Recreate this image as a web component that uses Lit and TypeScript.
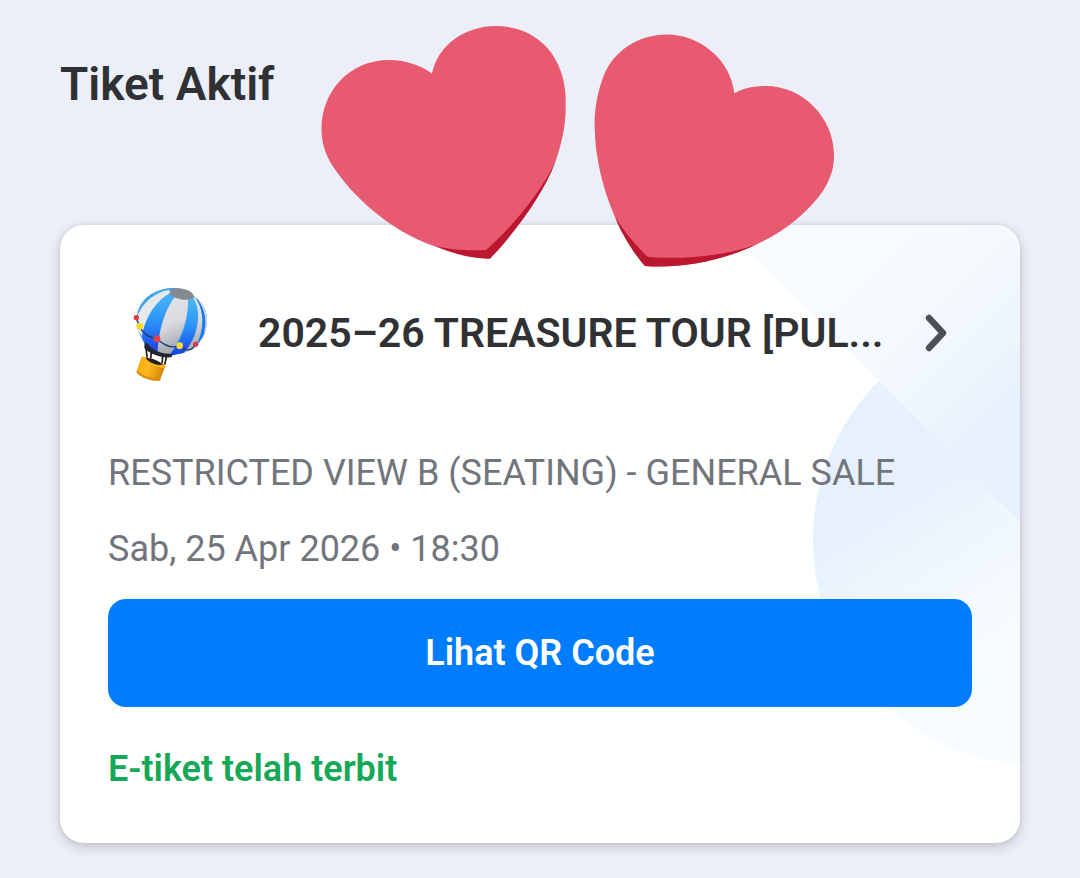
import { LitElement, html, css } from "lit";
import { customElement, property } from "lit/decorators.js";

@customElement("balloon-icon")
class BalloonIcon extends LitElement {
  static styles = css`
    :host { display: block; flex: none; width: 120px; height: 120px; }
    svg { display: block; width: 100%; height: 100%; }
  `;
  render() {
    return html`<svg viewBox="-6 9 360 360" aria-hidden="true">
      <defs>
        <linearGradient id="blue" x1="0" y1="0" x2="0" y2="1">
          <stop offset="0" stop-color="#4cb8f6" /><stop offset=".5" stop-color="#2a90f8" /><stop offset="1" stop-color="#1a3ce0" />
        </linearGradient>
        <linearGradient id="white" x1="0" y1="0" x2=".2" y2="1">
          <stop offset="0" stop-color="#e4e5e8" /><stop offset=".55" stop-color="#d9dade" /><stop offset="1" stop-color="#a2a6ae" />
        </linearGradient>
        <linearGradient id="gold" x1="0" y1="0" x2="1" y2=".3">
          <stop offset="0" stop-color="#f9a50c" /><stop offset=".5" stop-color="#fdbb1f" /><stop offset="1" stop-color="#d88708" />
        </linearGradient>
        <clipPath id="envelope"><path d="M180 54C208 50 236 62 258 84C284 104 294 132 290 164C286 196 268 222 244 238C224 250 202 254 186 256C164 256 134 252 112 236C104 216 82 190 80 158C76 104 116 60 180 54Z" /></clipPath>
      </defs>
      <g clip-path="url(#envelope)">
        <path fill="#3fa4ee" d="M70 45H300V265H70Z" />
        <path fill="#e6e8ec" d="M176 60C140 66 98 92 80 145L82 180C88 186 94 194 98 202C104 150 136 94 186 66Z" />
        <path fill="url(#blue)" d="M186 66C138 90 104 144 96 200L108 238L146 250C144 190 158 122 204 76Z" />
        <path fill="url(#white)" d="M200 74C160 120 146 190 142 250L176 256C206 220 238 150 234 86C224 86 210 82 200 74Z" />
        <path fill="url(#blue)" d="M234 86C240 150 212 220 176 258L222 250C254 226 274 150 250 84Z" />
        <path fill="url(#white)" d="M250 84C278 130 264 204 220 250L252 234C286 190 284 120 256 82Z" />
        <path fill="#1d78ee" d="M256 84C286 124 284 184 254 234L296 210V100Z" />
        <path fill="#dfe4ec" d="M262 88C284 114 292 152 282 188L296 180V110Z" />
      </g>
      <ellipse cx="215" cy="72" rx="37" ry="16" fill="#858a8f" transform="rotate(12 215 72)" />
      <path d="M79 144L89 170C100 192 120 204 141 206C162 226 184 236 209 228C226 244 246 244 257 223" fill="none" stroke="#1c3c80" stroke-width="4" />
      <path d="M108 235L112 268M124 244L122 270M158 258L156 282M170 258L164 284" stroke="#17191d" stroke-width="5" />
      <path d="M105 218C102 226 102 232 105 238C126 254 156 266 182 262C187 260 188 256 186 252C160 252 128 244 114 222Z" fill="#24272d" />
      <path d="M94 262L166 288L150 330C124 332 98 322 80 304Z" fill="url(#gold)" />
      <path d="M96 259C118 262 148 272 167 287C166 292 162 295 158 294C136 290 110 280 94 268Z" fill="#f9b325" />
      <path d="M106 263C126 264 148 272 159 285C138 286 118 278 106 263Z" fill="#22201d" />
      <path d="M80 300C96 318 126 328 152 326L150 332C124 334 94 324 80 308Z" fill="#df8708" />
      <circle cx="79" cy="143" r="8" fill="#e23b46" /><circle cx="89" cy="169" r="10" fill="#ffdc16" />
      <circle cx="141" cy="206" r="10" fill="#e6404b" /><circle cx="209" cy="227" r="10" fill="#ffdc3c" />
      <circle cx="257" cy="223" r="8" fill="#d63a49" />
    </svg>`;
  }
}

@customElement("ticket-card")
class TicketCard extends LitElement {
  @property() event = "";
  @property() category = "";
  @property() date = "";
  @property() status = "";

  static styles = css`
    :host {
      display: block;
      position: relative;
      padding: 48px;
      border-radius: 24px;
      background: #fff;
      box-shadow: 0 4px 12px rgba(40, 30, 50, 0.2), 0 0 4px rgba(40, 30, 50, 0.1);
    }
    .decor {
      position: absolute;
      top: 0;
      right: 0;
      width: 300px;
      height: 542px;
      border-top-right-radius: 24px;
    }
    .content { position: relative; }
    .head {
      display: flex;
      align-items: center;
      gap: 30px;
      color: #303135;
      text-decoration: none;
    }
    .event {
      flex: 1;
      min-width: 0;
      margin: 0;
      font-size: 41px;
      line-height: 60px;
      font-weight: 600;
      white-space: nowrap;
    }
    .chevron { flex: none; width: 60px; height: 60px; }
    .line {
      margin: 24px 0;
      font-size: 36px;
      line-height: 52px;
      color: #73757c;
    }
    .category { margin-top: 54px; }
    .action {
      display: block;
      width: 100%;
      height: 108px;
      padding: 0;
      border: 0;
      border-radius: 18px;
      background: #007dff;
      color: #fff;
      font: inherit;
      font-size: 36px;
      font-weight: 600;
    }
    .status {
      margin: 36px 0 0;
      font-size: 36px;
      line-height: 52px;
      font-weight: 600;
      color: #15a857;
    }
  `;

  render() {
    return html`
      <svg class="decor" viewBox="720 225 300 542" aria-hidden="true">
        <defs>
          <linearGradient id="disc" gradientUnits="userSpaceOnUse" x1="880" y1="500" x2="980" y2="660">
            <stop offset="0" stop-color="#e6f1fd" /><stop offset=".5" stop-color="#f0f7fe" /><stop offset="1" stop-color="#f8fcff" />
          </linearGradient>
          <linearGradient id="wedge" gradientUnits="userSpaceOnUse" x1="840" y1="270" x2="1000" y2="430">
            <stop offset="0" stop-color="#f8fcff" /><stop offset=".5" stop-color="#f3f8fe" /><stop offset="1" stop-color="#e6f1fd" />
          </linearGradient>
        </defs>
        <circle cx="1038" cy="540" r="225" fill="url(#disc)" />
        <path d="M723 225H1020V522Z" fill="url(#wedge)" />
      </svg>
      <div class="content">
        <a class="head" href="#">
          <balloon-icon></balloon-icon>
          <h2 class="event">${this.event}</h2>
          <svg class="chevron" viewBox="0 0 60 60" fill="none" stroke="#4e5059" stroke-width="6.4" stroke-linecap="round" stroke-linejoin="round" aria-hidden="true">
            <path d="M17 15L31 30L17 45" />
          </svg>
        </a>
        <p class="line category">${this.category}</p>
        <p class="line">${this.date}</p>
        <button class="action" type="button">Lihat QR Code</button>
        <p class="status">${this.status}</p>
      </div>
    `;
  }
}

@customElement("app-root")
class AppRoot extends LitElement {
  static styles = css`
    :host {
      display: block;
      position: relative;
      box-sizing: border-box;
      min-height: 100vh;
      padding: 54px 60px 35px;
      background: #eceff7;
      font-family: Roboto, "Noto Sans", sans-serif;
    }
    .title {
      margin: 0 0 111px;
      font-size: 46px;
      line-height: 60px;
      font-weight: 600;
      color: #303135;
    }
    .hearts {
      position: absolute;
      top: 24px;
      left: 320px;
      width: 516px;
      height: 246px;
    }
  `;

  render() {
    return html`
      <h1 class="title">Tiket Aktif</h1>
      <ticket-card
        event="2025–26 TREASURE TOUR [PUL..."
        category="RESTRICTED VIEW B (SEATING) - GENERAL SALE"
        date="Sab, 25 Apr 2026 • 18:30"
        status="E-tiket telah terbit"
      ></ticket-card>
      <svg class="hearts" viewBox="320 24 516 246" aria-hidden="true">
        <path fill="#e75a70" d="M432 73.500C419 64.500 405 60 389 60C350 60 321 91 321.500 130C322 144 325 153 332 165C352 196 390 231 434 246C452 253 470 258.500 490 258.700C520 227 544 191 555 163C562 143 566 125 565.700 105C566 95 565 85 562 75C553 43 526 26 496 26C465 26 438 45 432 73.500Z" />
        <path fill="#bc1730" d="M555 163C538 196 512 227 486 250C470 251 450 250 434 245.500C452 253 470 258.500 490 258.700C520 227 544 191 555 163Z" />
        <path fill="#e75a70" d="M734.300 93.300C731 60 700 34.500 667 34.500C638 34.500 614 51 604 75C597 92 594 113 594.700 127C595 157 603 190 615 217C622 235 635 255 645 266C680 268.500 720 262 757 244C785 232 809 211 823 191C831 178 834 168 834 155C834 118 803 86 766 86C754 86 744 88 734.300 93.300Z" />
        <path fill="#bc1730" d="M615 217C624 231 636 246 648 257C680 259.500 725 257 760 243C720 262 680 268.500 645 266C635 255 622 235 615 217Z" />
      </svg>
    `;
  }
}
